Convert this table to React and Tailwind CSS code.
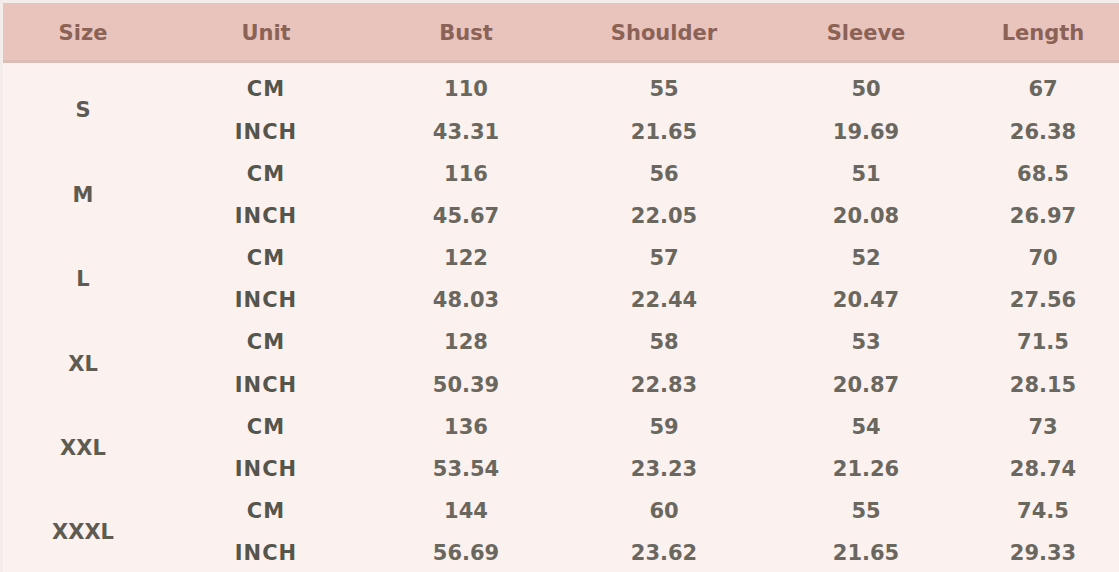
import React from "react";

const headers = ["Size", "Unit", "Bust", "Shoulder", "Sleeve", "Length"];
const data = [
  ["S", ["110", "55", "50", "67"], ["43.31", "21.65", "19.69", "26.38"]],
  ["M", ["116", "56", "51", "68.5"], ["45.67", "22.05", "20.08", "26.97"]],
  ["L", ["122", "57", "52", "70"], ["48.03", "22.44", "20.47", "27.56"]],
  ["XL", ["128", "58", "53", "71.5"], ["50.39", "22.83", "20.87", "28.15"]],
  ["XXL", ["136", "59", "54", "73"], ["53.54", "23.23", "21.26", "28.74"]],
  ["XXXL", ["144", "60", "55", "74.5"], ["56.69", "23.62", "21.65", "29.33"]],
];

const cols = "grid grid-cols-[160px_206px_194px_202px_202px_152px]";

export default function App() {
  return (
    <div
      className="w-[1119px] h-[572px] overflow-hidden bg-[#f3ecea] pt-[3px] pl-[3px]"
      style={{ fontFamily: '"DejaVu Sans", Verdana, sans-serif' }}
    >
      <div className={`${cols} h-[60px] bg-[#e9c4bd] border-b-[3px] border-[#dcbdb6] items-center`}>
        {headers.map((h) => (
          <div key={h} className="text-center text-[21px] font-bold text-[#8a6256] pt-[5px]">
            {h}
          </div>
        ))}
      </div>
      <div className="bg-[#fbf1ef] pt-[6px] h-[509px]">
        {data.map(([size, cm, inch]) => (
          <div key={size} className={cols}>
            <div className="row-span-2 flex items-center justify-center text-[21px] font-bold text-[#5d5b52]">
              {size}
            </div>
            <div className="h-[42.2px] flex items-center justify-center text-[21px] font-bold text-[#56554c] tracking-[1px]">
              CM
            </div>
            {cm.map((v, i) => (
              <div key={"c" + i} className="h-[42.2px] flex items-center justify-center text-[21px] font-bold text-[#6a675f]">
                {v}
              </div>
            ))}
            <div className="h-[42.2px] flex items-center justify-center text-[21px] font-bold text-[#56554c] tracking-[1px]">
              INCH
            </div>
            {inch.map((v, i) => (
              <div key={"i" + i} className="h-[42.2px] flex items-center justify-center text-[21px] font-bold text-[#6a675f]">
                {v}
              </div>
            ))}
          </div>
        ))}
      </div>
    </div>
  );
}
